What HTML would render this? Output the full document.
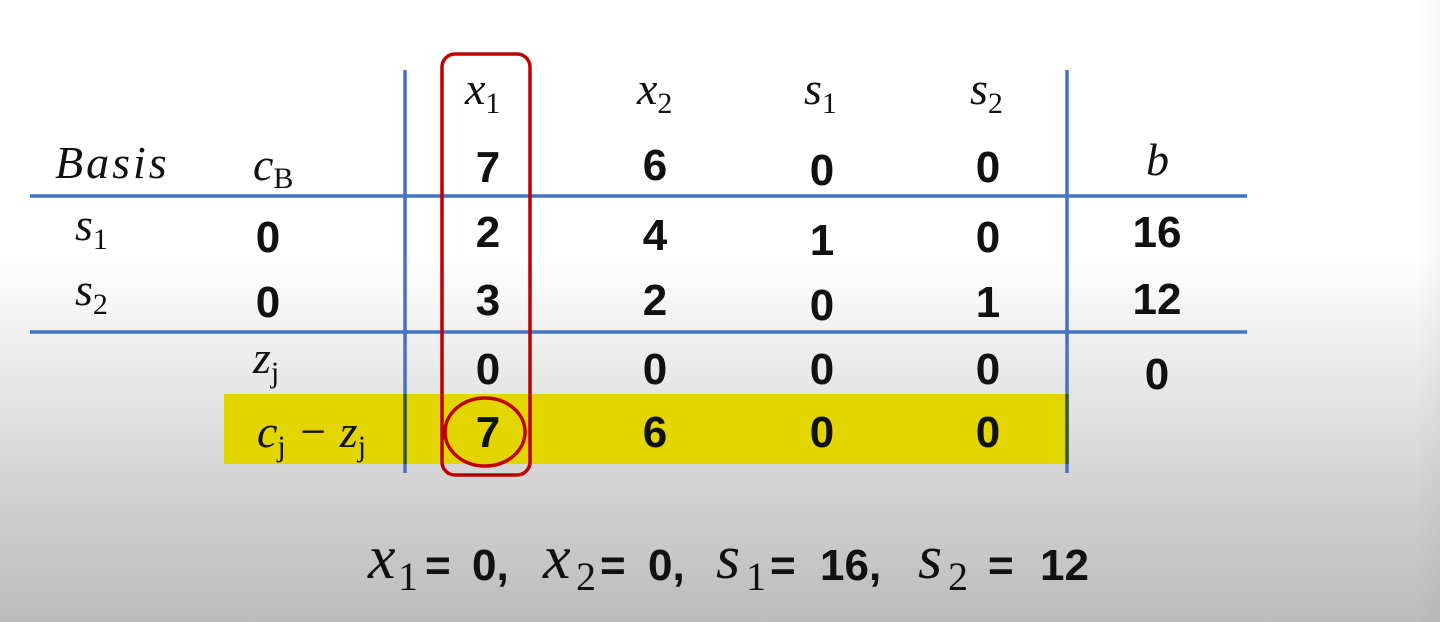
<!DOCTYPE html>
<html><head><meta charset="utf-8"><style>
html,body{margin:0;padding:0}
body{width:1440px;height:622px;overflow:hidden;position:relative;
background:linear-gradient(180deg,#fff 0,#fff 255px,#e8e8e8 380px,#d0d0d0 500px,#bcbcbc 622px);}
.edge{position:absolute;right:0;top:0;width:25px;height:622px;background:linear-gradient(90deg,rgba(0,0,0,0),rgba(0,0,0,0.03))}
svg{position:absolute;left:0;top:0}
.m{font-family:"Liberation Serif",serif;font-style:italic;fill:#111}
.n{font-family:"Liberation Sans",sans-serif;font-weight:bold;fill:#111;font-size:44px}
.sub{font-style:normal}
</style></head><body>
<div class="edge"></div>
<svg width="1440" height="622" viewBox="0 0 1440 622">
<rect x="224" y="394" width="843" height="70" fill="#e3d600"/>
<g stroke="#4472c4" stroke-width="3.5">
<line x1="30" y1="196" x2="1247" y2="196"/>
<line x1="30" y1="332" x2="1247" y2="332"/>
<line x1="405" y1="70" x2="405" y2="473"/>
<line x1="1067" y1="70" x2="1067" y2="473"/>
</g>
<line x1="405" y1="394" x2="405" y2="464" stroke="#3a5a20" stroke-width="3.5"/>
<line x1="1067" y1="394" x2="1067" y2="464" stroke="#3a5a20" stroke-width="3.5"/>
<rect x="442" y="54" width="88" height="421" rx="13" fill="none" stroke="#c00000" stroke-width="3.5"/>
<ellipse cx="485" cy="432" rx="40" ry="34" fill="none" stroke="#c00000" stroke-width="3.5"/>

<g class="m" font-size="46">
<text x="465" y="104">x<tspan class="sub" font-size="30" dy="9">1</tspan></text>
<text x="637" y="104">x<tspan class="sub" font-size="30" dy="9">2</tspan></text>
<text x="804" y="104">s<tspan class="sub" font-size="30" dy="9">1</tspan></text>
<text x="970" y="104">s<tspan class="sub" font-size="30" dy="9">2</tspan></text>
<text x="55" y="178" letter-spacing="3">Basis</text>
<text x="253" y="180">c<tspan class="sub" font-size="30" dy="8">B</tspan></text>
<text x="1146" y="175">b</text>
<text x="75" y="240">s<tspan class="sub" font-size="30" dy="9">1</tspan></text>
<text x="75" y="305">s<tspan class="sub" font-size="30" dy="9">2</tspan></text>
<text x="253" y="373">z<tspan class="sub" font-size="30" dy="9">j</tspan></text>
<text x="257" y="447">c<tspan class="sub" font-size="30" dy="9">j</tspan><tspan dy="-9"> − z</tspan><tspan class="sub" font-size="30" dy="9">j</tspan></text>
</g>
<g class="n" text-anchor="middle">
<text x="488" y="182">7</text><text x="655" y="180">6</text><text x="822" y="185">0</text><text x="988" y="182">0</text>
<text x="268" y="252">0</text><text x="488" y="247">2</text><text x="655" y="250">4</text><text x="822" y="255">1</text><text x="988" y="252">0</text><text x="1157" y="247">16</text>
<text x="268" y="317">0</text><text x="488" y="315">3</text><text x="655" y="315">2</text><text x="822" y="320">0</text><text x="988" y="317">1</text><text x="1157" y="314">12</text>
<text x="488" y="384">0</text><text x="655" y="384">0</text><text x="822" y="384">0</text><text x="988" y="384">0</text><text x="1157" y="389">0</text>
<text x="488" y="447">7</text><text x="655" y="447">6</text><text x="822" y="447">0</text><text x="988" y="447">0</text>
</g>
<g font-size="62">
<text class="m" x="368" y="578">x</text><text class="m sub" font-size="40" x="398" y="590">1</text>
<text class="n" font-size="58" x="425" y="580">=</text><text class="n" font-size="58" x="472" y="580">0,</text>
<text class="m" x="543" y="578">x</text><text class="m sub" font-size="40" x="576" y="590">2</text>
<text class="n" font-size="58" x="600" y="580">=</text><text class="n" font-size="58" x="648" y="580">0,</text>
<text class="m" x="716" y="578">s</text><text class="m sub" font-size="40" x="746" y="590">1</text>
<text class="n" font-size="58" x="770" y="580">=</text><text class="n" font-size="58" x="820" y="580">16,</text>
<text class="m" x="918" y="578">s</text><text class="m sub" font-size="40" x="948" y="590">2</text>
<text class="n" font-size="58" x="988" y="580">=</text><text class="n" font-size="58" x="1040" y="580">12</text>
</g>
</svg>
</body></html>
